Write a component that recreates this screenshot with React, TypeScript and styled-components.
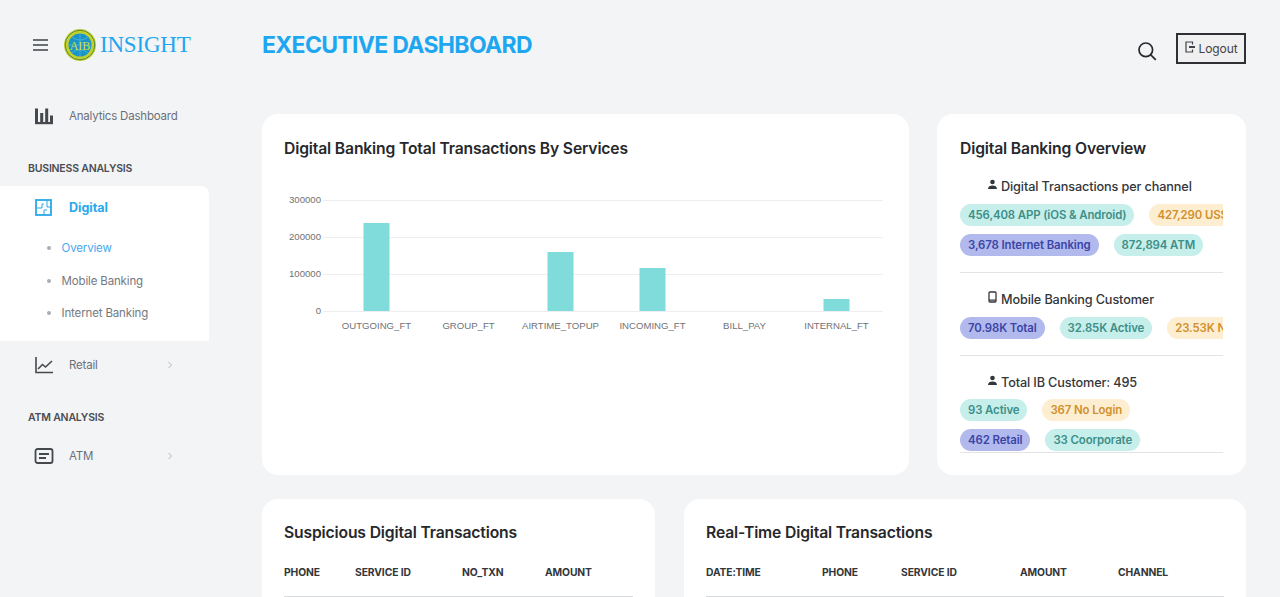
import React from "react";
import styled, { createGlobalStyle } from "styled-components";

const GlobalStyle = createGlobalStyle`
  html, body {
    margin: 0;
    padding: 0;
    height: 100%;
    overflow: hidden;
    background: #f3f4f6;
    font-family: Inter, "Open Sans", sans-serif;
  }
  * {
    box-sizing: border-box;
  }
`;

const Page = styled.div`
  display: flex;
  height: 597px;
  overflow: hidden;
`;

const Sidebar = styled.aside`
  flex: 0 0 209px;
  padding-top: 29px;
  color: #6b7078;
`;

const Brand = styled.div`
  display: flex;
  align-items: center;
  height: 32px;
  padding-left: 33px;
`;

const BrandName = styled.span`
  margin-left: 4px;
  font-family: "Liberation Serif", serif;
  font-size: 23px;
  line-height: 32px;
  letter-spacing: -0.2px;
  color: #1ea7f0;
`;

const Burger = styled.svg`
  width: 15px;
  height: 12px;
  margin-right: 16px;
  color: #3f4348;
`;

const NavRow = styled.div<{ $top?: number }>`
  display: flex;
  align-items: center;
  height: 40px;
  margin-top: ${(p) => p.$top ?? 0}px;
  padding-left: 34px;
  font-size: 11.5px;
  letter-spacing: -0.2px;
`;

const NavIcon = styled.svg`
  width: 20px;
  height: 20px;
  margin-right: 15px;
  color: #45484d;
`;

const Chevron = styled.span`
  margin-left: auto;
  margin-right: 36px;
  display: flex;
  color: #b4b8bd;
`;

const SectionLabel = styled.div<{ $top: number }>`
  height: 20px;
  margin-top: ${(p) => p.$top}px;
  padding-left: 28px;
  font-size: 10.5px;
  line-height: 20px;
  font-weight: 600;
  letter-spacing: -0.2px;
  color: #4a4d52;
`;

const ActiveGroup = styled.div`
  margin-top: 7px;
  height: 155px;
  background: #fff;
  border-radius: 0 8px 0 0;
`;

const ActiveRow = styled.div`
  display: flex;
  align-items: center;
  height: 42px;
  padding-left: 35px;
  font-size: 12.5px;
  font-weight: 700;
  color: #28a9ec;
`;

const ActiveIcon = styled.svg`
  width: 17px;
  height: 17px;
  margin-right: 17px;
  color: #28a9ec;
`;

const SubList = styled.div`
  margin-top: 4px;
`;

const SubItem = styled.div<{ $active?: boolean }>`
  display: flex;
  align-items: center;
  height: 32.5px;
  padding-left: 47px;
  font-size: 11.5px;
  letter-spacing: -0.15px;
  color: ${(p) => (p.$active ? "#4aa8f0" : "#75797f")};

  &::before {
    content: "";
    width: 4px;
    height: 4px;
    margin-right: 10.5px;
    border-radius: 50%;
    background: #a9adb2;
  }
`;

const Main = styled.main`
  flex: 1;
  min-width: 0;
  padding: 33px 34px 0 53px;
`;

const TopBar = styled.header`
  display: flex;
  align-items: flex-start;
  height: 81px;
`;

const Title = styled.h1`
  margin: 0;
  flex: 1;
  font-size: 23px;
  line-height: 24px;
  font-weight: 700;
  letter-spacing: -0.68px;
  color: #1ea7f0;
`;

const SearchButton = styled.span`
  display: flex;
  margin: 8px 19px 0 0;
  color: #26282c;
`;

const LogoutButton = styled.button`
  display: flex;
  align-items: center;
  justify-content: center;
  gap: 3px;
  width: 70px;
  height: 31px;
  padding: 0;
  border: 2px solid #2e3033;
  background: #f0f0f0;
  font-family: inherit;
  font-size: 12px;
  letter-spacing: -0.1px;
  color: #3f4348;
`;

const CardRow = styled.div<{ $columns: string; $gap: number }>`
  display: grid;
  grid-template-columns: ${(p) => p.$columns};
  column-gap: ${(p) => p.$gap}px;
  margin-bottom: 24px;
`;

const Card = styled.section<{ $height: number; $top?: number; $side?: number }>`
  height: ${(p) => p.$height}px;
  padding: ${(p) => p.$top ?? 22}px ${(p) => p.$side ?? 22}px 0;
  background: #fff;
  border-radius: 16px;
  overflow: hidden;
`;

const CardTitle = styled.h2`
  margin: 0;
  font-size: 15.7px;
  line-height: 24px;
  font-weight: 600;
  letter-spacing: -0.15px;
  color: #26282c;
`;

const ChartSvg = styled.svg`
  display: block;
  width: 600px;
  height: 160px;
  margin-top: 23px;
  font-family: "Liberation Sans", Arial, sans-serif;
  font-size: 9.6px;
  fill: #6f7276;
`;

const Groups = styled.div`
  margin-top: 15px;
`;

const Group = styled.div<{ $last?: boolean }>`
  padding-bottom: ${(p) => (p.$last ? 1 : 16)}px;
  margin-bottom: ${(p) => (p.$last ? 0 : 16)}px;
  border-bottom: 1px solid #e1e3e6;
`;

const GroupHead = styled.div<{ $tight?: boolean }>`
  display: flex;
  align-items: center;
  gap: 3px;
  height: 20px;
  margin-bottom: ${(p) => (p.$tight ? -1 : 0)}px;
  padding-left: 27px;
  font-size: 12.7px;
  font-weight: 500;
  letter-spacing: -0.13px;
  color: #33363a;
`;

const PillLine = styled.div`
  display: flex;
  gap: 15px;
  margin-top: 8px;
  overflow: hidden;
`;

const tones = {
  teal: { bg: "#c6eeea", fg: "#3d8f88" },
  amber: { bg: "#fdeed2", fg: "#d1902c" },
  indigo: { bg: "#b2b9ed", fg: "#3b45a6" },
};

const Pill = styled.span<{ $tone: keyof typeof tones }>`
  flex: none;
  height: 22px;
  padding: 0 8px;
  border-radius: 11px;
  font-size: 11.4px;
  line-height: 22px;
  font-weight: 600;
  letter-spacing: -0.1px;
  white-space: nowrap;
  background: ${(p) => tones[p.$tone].bg};
  color: ${(p) => tones[p.$tone].fg};
`;

const TableHead = styled.div<{ $columns: string }>`
  display: grid;
  grid-template-columns: ${(p) => p.$columns};
  align-items: center;
  height: 35px;
  margin-top: 17px;
  padding-bottom: 14px;
  border-bottom: 1px solid #d8dade;
  font-size: 10.3px;
  font-weight: 700;
  letter-spacing: -0.1px;
  color: #33363a;
`;

const BarIcon = () => (
  <NavIcon viewBox="0 0 20 20" fill="currentColor">
    <rect x="1" y="2.500" width="3" height="15" />
    <rect x="6.200" y="7" width="3" height="10" />
    <rect x="11.200" y="2.500" width="3" height="15" />
    <rect x="16" y="9.500" width="3" height="8" />
    <rect x="1" y="16" width="18" height="2.200" />
  </NavIcon>
);

const LineIcon = () => (
  <NavIcon viewBox="0 0 20 20" fill="none" stroke="currentColor" strokeWidth="1.6">
    <path d="M2 2v15.500h17" />
    <path d="M4 14l4.500-4.500 3 2.500L18 6" />
  </NavIcon>
);

const ListIcon = () => (
  <NavIcon viewBox="0 0 20 20" fill="none" stroke="currentColor" strokeWidth="1.800">
    <rect x="1.500" y="3" width="17" height="14" rx="2" />
    <path d="M5 8h10M5 12h7" />
  </NavIcon>
);

const SmallChevron = () => (
  <Chevron>
    <svg width="6" height="8" viewBox="0 0 6 8" fill="none" stroke="currentColor" strokeWidth="1">
      <path d="M1.500 1l3 3-3 3" />
    </svg>
  </Chevron>
);

const PersonIcon = () => (
  <svg width="11" height="11" viewBox="0 0 11 11" fill="#33363a" style={{ marginTop: -4 }}>
    <circle cx="5.500" cy="3" r="2.300" />
    <path d="M1 10c0-2.500 2-3.600 4.500-3.600S10 7.500 10 10z" />
  </svg>
);

const PhoneIcon = () => (
  <svg width="11" height="12" viewBox="0 0 11 12" fill="none" stroke="#33363a" strokeWidth="1.300" style={{ marginTop: -4 }}>
    <rect x="2" y="1" width="7" height="10" rx="1" />
    <path d="M2 9.200h7" />
  </svg>
);

const Logo = () => (
  <svg width="32" height="32" viewBox="0 0 32 32">
    <circle cx="16" cy="16" r="16" fill="#c3d12e" />
    <circle cx="16" cy="16" r="14.800" fill="none" stroke="#3f7a3a" strokeWidth="0.800" />
    <circle cx="16" cy="16" r="11.500" fill="#1b95c9" />
    <path d="M4.500 16h23M16 4.500v23M8 8c5 4 11 4 16 0M8 24c5-4 11-4 16 0" fill="none" stroke="#5fbcd9" strokeWidth="0.600" />
    <text x="16" y="20.500" textAnchor="middle" fontFamily="Liberation Serif, serif" fontSize="12" fill="#cfe03a">
      AIB
    </text>
  </svg>
);

const columnsLeft = "71px 107px 83px 1fr";
const columnsRight = "116px 79px 119px 98px 1fr";

const gridLines = [16, 53, 90, 127];
const axisLabels = ["300000", "200000", "100000", "0"];
const services = [
  { name: "OUTGOING_FT", center: 92.5, height: 88 },
  { name: "GROUP_FT", center: 184.5, height: 0 },
  { name: "AIRTIME_TOPUP", center: 276.5, height: 59 },
  { name: "INCOMING_FT", center: 368.5, height: 43 },
  { name: "BILL_PAY", center: 460.5, height: 0 },
  { name: "INTERNAL_FT", center: 552.5, height: 12 },
];

const ServicesChart = () => (
  <ChartSvg viewBox="0 0 600 160">
    {gridLines.map((y, i) => (
      <g key={y}>
        <line x1="39" x2="599" y1={y + 0.5} y2={y + 0.5} stroke="#eceef0" />
        <text x="37" y={y + 2.5} textAnchor="end">
          {axisLabels[i]}
        </text>
      </g>
    ))}
    {services.map((s) => (
      <g key={s.name}>
        {s.height > 0 && <rect x={s.center - 13} y={127 - s.height} width="26" height={s.height} fill="#80dcdb" />}
        <text x={s.center} y="145" textAnchor="middle">
          {s.name}
        </text>
      </g>
    ))}
  </ChartSvg>
);

const App = () => {
  return (
    <Page>
      <GlobalStyle />
      <Sidebar>
        <Brand>
          <Burger viewBox="0 0 15 12" stroke="currentColor" strokeWidth="1.400">
            <path d="M0 1h15M0 6h15M0 11h15" />
          </Burger>
          <Logo />
          <BrandName>INSIGHT</BrandName>
        </Brand>
        <NavRow $top={35}>
          <BarIcon />
          Analytics Dashboard
        </NavRow>
        <SectionLabel $top={23}>BUSINESS ANALYSIS</SectionLabel>
        <ActiveGroup>
          <ActiveRow>
            <ActiveIcon viewBox="0 0 17 17" fill="none" stroke="currentColor" strokeWidth="1.800">
              <rect x="1" y="1" width="15" height="15" />
              <path d="M1 9h6V5h2M12 1v7h4M9 16v-5h3" strokeWidth="1" />
            </ActiveIcon>
            Digital
          </ActiveRow>
          <SubList>
            <SubItem $active>Overview</SubItem>
            <SubItem>Mobile Banking</SubItem>
            <SubItem>Internet Banking</SubItem>
          </SubList>
        </ActiveGroup>
        <NavRow $top={4}>
          <LineIcon />
          Retail
          <SmallChevron />
        </NavRow>
        <SectionLabel $top={23}>ATM ANALYSIS</SectionLabel>
        <NavRow $top={8}>
          <ListIcon />
          ATM
          <SmallChevron />
        </NavRow>
      </Sidebar>

      <Main>
        <TopBar>
          <Title>EXECUTIVE DASHBOARD</Title>
          <SearchButton>
            <svg width="20" height="20" viewBox="0 0 20 20" fill="none" stroke="currentColor" strokeWidth="1.700">
              <circle cx="8.800" cy="8.800" r="6.800" />
              <path d="M13.800 13.800l5 5" />
            </svg>
          </SearchButton>
          <LogoutButton>
            <svg width="11" height="12" viewBox="0 0 11 12" fill="none" stroke="currentColor" strokeWidth="1.200" style={{ marginTop: -4 }}>
              <path d="M7.500 3.500V1H1v10h6.500V8.500" />
              <path d="M4 6h6" strokeWidth="2" />
            </svg>
            Logout
          </LogoutButton>
        </TopBar>

        <CardRow $columns="647px 309px" $gap={28}>
          <Card $height={361} $top={23}>
            <CardTitle>Digital Banking Total Transactions By Services</CardTitle>
            <ServicesChart />
          </Card>
          <Card $height={361} $top={23} $side={23}>
            <CardTitle>Digital Banking Overview</CardTitle>
            <Groups>
              <Group>
                <GroupHead>
                  <PersonIcon />
                  Digital Transactions per channel
                </GroupHead>
                <PillLine>
                  <Pill $tone="teal">456,408 APP (iOS &amp; Android)</Pill>
                  <Pill $tone="amber">427,290 USSD</Pill>
                </PillLine>
                <PillLine>
                  <Pill $tone="indigo">3,678 Internet Banking</Pill>
                  <Pill $tone="teal">872,894 ATM</Pill>
                </PillLine>
              </Group>
              <Group>
                <GroupHead>
                  <PhoneIcon />
                  Mobile Banking Customer
                </GroupHead>
                <PillLine>
                  <Pill $tone="indigo">70.98K Total</Pill>
                  <Pill $tone="teal">32.85K Active</Pill>
                  <Pill $tone="amber">23.53K No Login</Pill>
                </PillLine>
              </Group>
              <Group $last>
                <GroupHead $tight>
                  <PersonIcon />
                  Total IB Customer: 495
                </GroupHead>
                <PillLine>
                  <Pill $tone="teal">93 Active</Pill>
                  <Pill $tone="amber">367 No Login</Pill>
                </PillLine>
                <PillLine>
                  <Pill $tone="indigo">462 Retail</Pill>
                  <Pill $tone="teal">33 Coorporate</Pill>
                </PillLine>
              </Group>
            </Groups>
          </Card>
        </CardRow>

        <CardRow $columns="393px 562px" $gap={29}>
          <Card $height={200}>
            <CardTitle>Suspicious Digital Transactions</CardTitle>
            <TableHead $columns={columnsLeft}>
              <span>PHONE</span>
              <span>SERVICE ID</span>
              <span>NO_TXN</span>
              <span>AMOUNT</span>
            </TableHead>
          </Card>
          <Card $height={200}>
            <CardTitle>Real-Time Digital Transactions</CardTitle>
            <TableHead $columns={columnsRight}>
              <span>DATE:TIME</span>
              <span>PHONE</span>
              <span>SERVICE ID</span>
              <span>AMOUNT</span>
              <span>CHANNEL</span>
            </TableHead>
          </Card>
        </CardRow>
      </Main>
    </Page>
  );
};

export default App;
